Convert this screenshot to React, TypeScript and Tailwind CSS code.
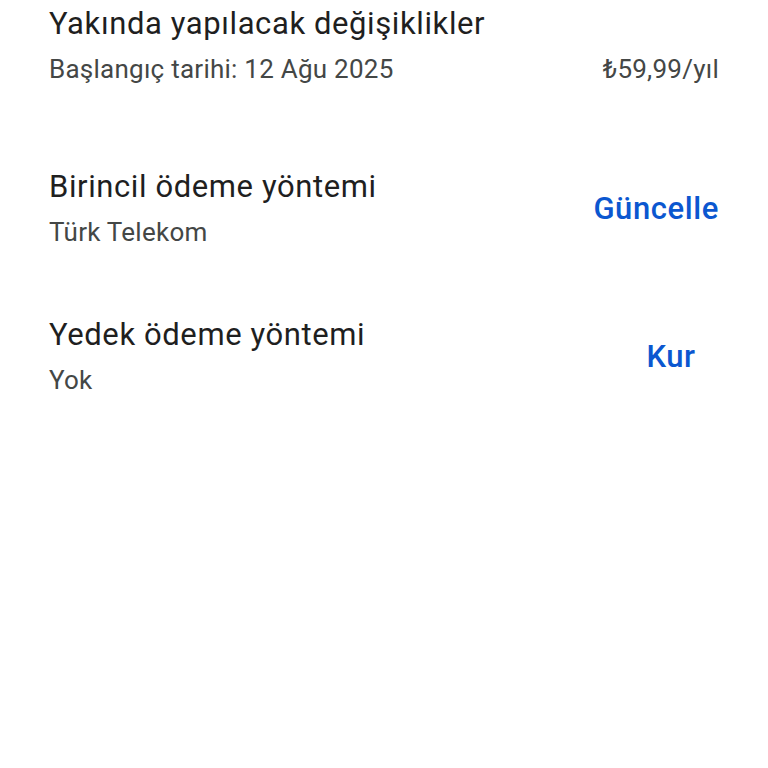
const font = { fontFamily: "Roboto, 'Noto Sans', sans-serif" };

function Row({
  title,
  subtitle,
  right,
  action,
  className,
}: {
  title: string;
  subtitle: string;
  right?: string;
  action?: string;
  className?: string;
}) {
  return (
    <div className={`flex items-center justify-between ${className ?? ""}`}>
      <div className="flex flex-col">
        <span className="text-[31px] leading-[46px] tracking-[0.6px] text-[#1f1f1f]">{title}</span>
        <span className="text-[26px] leading-[44px] tracking-[0.25px] text-[#444746]">{subtitle}</span>
      </div>
      {right && (
        <span className="self-end text-[26px] leading-[44px] tracking-[0.25px] text-[#444746]">
          {right}
        </span>
      )}
      {action && (
        <button className="min-w-[96px] text-center text-[31px] font-medium tracking-[0.6px] text-[#0b57d0]">
          {action}
        </button>
      )}
    </div>
  );
}

export default function App() {
  return (
    <div className="min-h-[768px] w-full bg-white pl-[49px] pr-[49px] pt-[1px]" style={font}>
      <Row
        title="Yakında yapılacak değişiklikler"
        subtitle="Başlangıç tarihi: 12 Ağu 2025"
        right="₺59,99/yıl"
      />
      <Row
        className="mt-[73px]"
        title="Birincil ödeme yöntemi"
        subtitle="Türk Telekom"
        action="Güncelle"
      />
      <Row
        className="mt-[58px]"
        title="Yedek ödeme yöntemi"
        subtitle="Yok"
        action="Kur"
      />
    </div>
  );
}
